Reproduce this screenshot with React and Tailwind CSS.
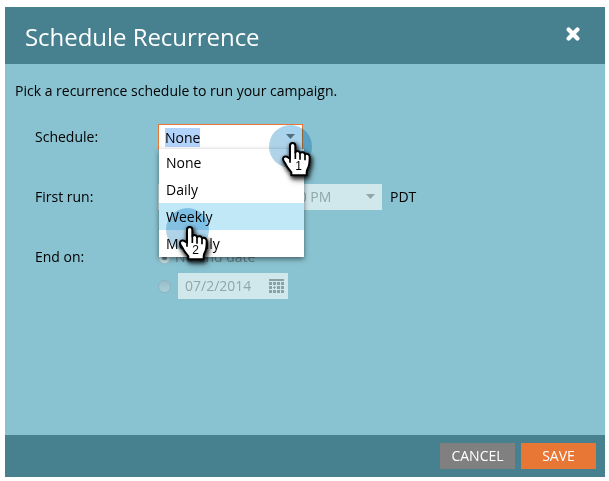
function Hand({ label, className }) {
  return (
    <svg
      className={`absolute overflow-visible [filter:drop-shadow(1px_2px_2px_rgba(0,0,0,0.8))_drop-shadow(1px_2px_2px_rgba(0,0,0,0.5))] ${className}`}
      width="34" height="40" viewBox="0 0 102 120"
    >
      <path
        d="M24 53V14C24 3 40 3 40 14V34C44 28 53 30 54 36C60 31 68 34 69 40C76 36 84 41 83 49C83 61 83 68 80 76C77 82 74 88 74 94V103H28V94C24 87 17 82 13 73C10 65 3 61 3 53C4 45 13 45 18 49Z"
        fill="white" stroke="black" strokeWidth="6" strokeLinejoin="round"
      />
      <path d="M40 32V54M54 37V56M69 42V58M24 50V65" fill="none" stroke="black" strokeWidth="5" />
      <text x="50" y="87" textAnchor="middle" fontSize="36" fontFamily="Liberation Sans, Arial, sans-serif">{label}</text>
    </svg>
  );
}

function Halo({ className }) {
  return (
    <div className={`absolute size-[43px] rounded-full bg-linear-to-tr from-[#b3d3e5] via-[#acd3ea] to-[#9fd4f4] mix-blend-multiply blur-[0.6px] ${className}`} />
  );
}

function Arrow({ className }) {
  return <svg className={className} width="9" height="5" viewBox="0 0 9 5"><path d="M0 0H9L4.5 5Z" fill="currentColor" /></svg>;
}

function Radio({ checked }) {
  return (
    <span className={`flex size-[13px] items-center justify-center rounded-full border bg-linear-to-b ${checked ? "border-[#a3bec5] from-[#a9cbd4] to-[#c9e2e8]" : "border-[#8fb4be] from-[#98bdc8] to-[#a9d0da]"}`}>
      {checked && <span className="size-[5px] rounded-full bg-[#5f7f88]" />}
    </span>
  );
}

function CalendarIcon() {
  return (
    <svg width="15" height="14" viewBox="0 0 15 14" fill="#8aa1a5" shapeRendering="crispEdges">
      <path d="M0 0h15v2H0z" />
      {[3, 7, 11].map((y) =>
        [0, 4, 8, 12].map((x) =>
          x === 4 && y === 7
            ? <path key="today" d="M5 7h1v1h1v1h-1v1h-1v-1h-1v-1h1z" />
            : <rect key={`${x}-${y}`} x={x} y={y} width="3" height="3" />
        )
      )}
    </svg>
  );
}

const options = ["None", "Daily", "Weekly", "Monthly"];

export default function App() {
  return (
    <div className="h-[481px] w-[609px] overflow-hidden bg-white pt-[7px] pl-[5px] font-['Open_Sans','Noto_Sans',sans-serif] text-[14px] leading-[20px] text-black">
      <div className="flex h-[470px] w-[600px] flex-col bg-[#89c2d0]">
        <header className="flex h-[57px] items-center justify-between bg-[#47808f] pr-[25px] pl-5 text-white">
          <h1 className="pt-[2px] text-[24px] leading-[32px] tracking-[-0.04px]">Schedule Recurrence</h1>
          <svg className="-mt-[3px]" width="14" height="14" viewBox="0 0 14 14">
            <path d="M2.6 2.6L11.4 11.4M11.4 2.6L2.6 11.4" stroke="white" strokeWidth="4.2" strokeLinecap="round" />
          </svg>
        </header>

        <main className="flex-1 pt-[17px]">
          <p className="pl-[10px]">Pick a recurrence schedule to run your campaign.</p>

          <div className="mt-[23px] flex h-[26px] items-center pl-[30px]">
            <span className="w-[123px]">Schedule:</span>
            <div className="relative flex h-[26px] w-[145px] items-center border border-[#e87634] bg-white pl-[6px]">
              <span className="bg-[#b2d3fb] leading-[19px]">None</span>
              <Arrow className="mr-[7px] mb-[2px] ml-auto text-[#7b8588]" />
              <ul className="absolute top-[24px] left-0 z-10 w-[145px] bg-white shadow-[0_2px_5px_rgba(0,0,0,0.5)]">
                {options.map((o) => (
                  <li key={o} className={`h-[27px] pl-[7px] leading-[28px] ${o === "Weekly" ? "bg-[#c1e8f7]" : ""}`}>{o}</li>
                ))}
              </ul>
              <Halo className="top-0 left-[110px] z-20" />
              <Hand label="1" className="top-[16px] left-[123px] z-20" />
              <Halo className="top-[83px] left-[7px] z-20" />
              <Hand label="2" className="top-[100px] left-[20px] z-20" />
            </div>
          </div>

          <div className="mt-[34px] flex h-[26px] items-center pl-[30px]">
            <span className="w-[123px]">First run:</span>
            <div className="h-[26px] w-[110px] bg-[#d0e7eb]" />
            <div className="ml-[4px] flex h-[26px] w-[110px] items-center bg-[#d0e7eb] pr-[7px] pl-[7px] text-[#8fa6aa]">
              <span className="whitespace-nowrap">8:00 PM</span>
              <Arrow className="mb-[2px] ml-auto" />
            </div>
            <span className="ml-2">PDT</span>
          </div>

          <div className="mt-[34px] flex pl-[30px]">
            <span className="w-[123px] pt-[3px]">End on:</span>
            <div>
              <div className="flex h-[26px] items-center gap-[4px] text-[#607d85]">
                <Radio checked />
                <span>No end date</span>
              </div>
              <div className="mt-[3px] flex h-[26px] items-center gap-[7px]">
                <Radio />
                <div className="flex h-[26px] w-[110px] items-center justify-between bg-[#d0e7eb] pr-[4px] pl-[7px] text-[#8fa6aa]">
                  <span>07/2/2014</span>
                  <CalendarIcon />
                </div>
              </div>
            </div>
          </div>
        </main>

        <footer className="flex h-[42px] items-center justify-end gap-[6px] bg-[#47808f] pr-[9px] text-white">
          <button className="h-[26px] w-[75px] bg-[#808080]">CANCEL</button>
          <button className="h-[26px] w-[75px] bg-[#e87634]">SAVE</button>
        </footer>
      </div>
    </div>
  );
}
